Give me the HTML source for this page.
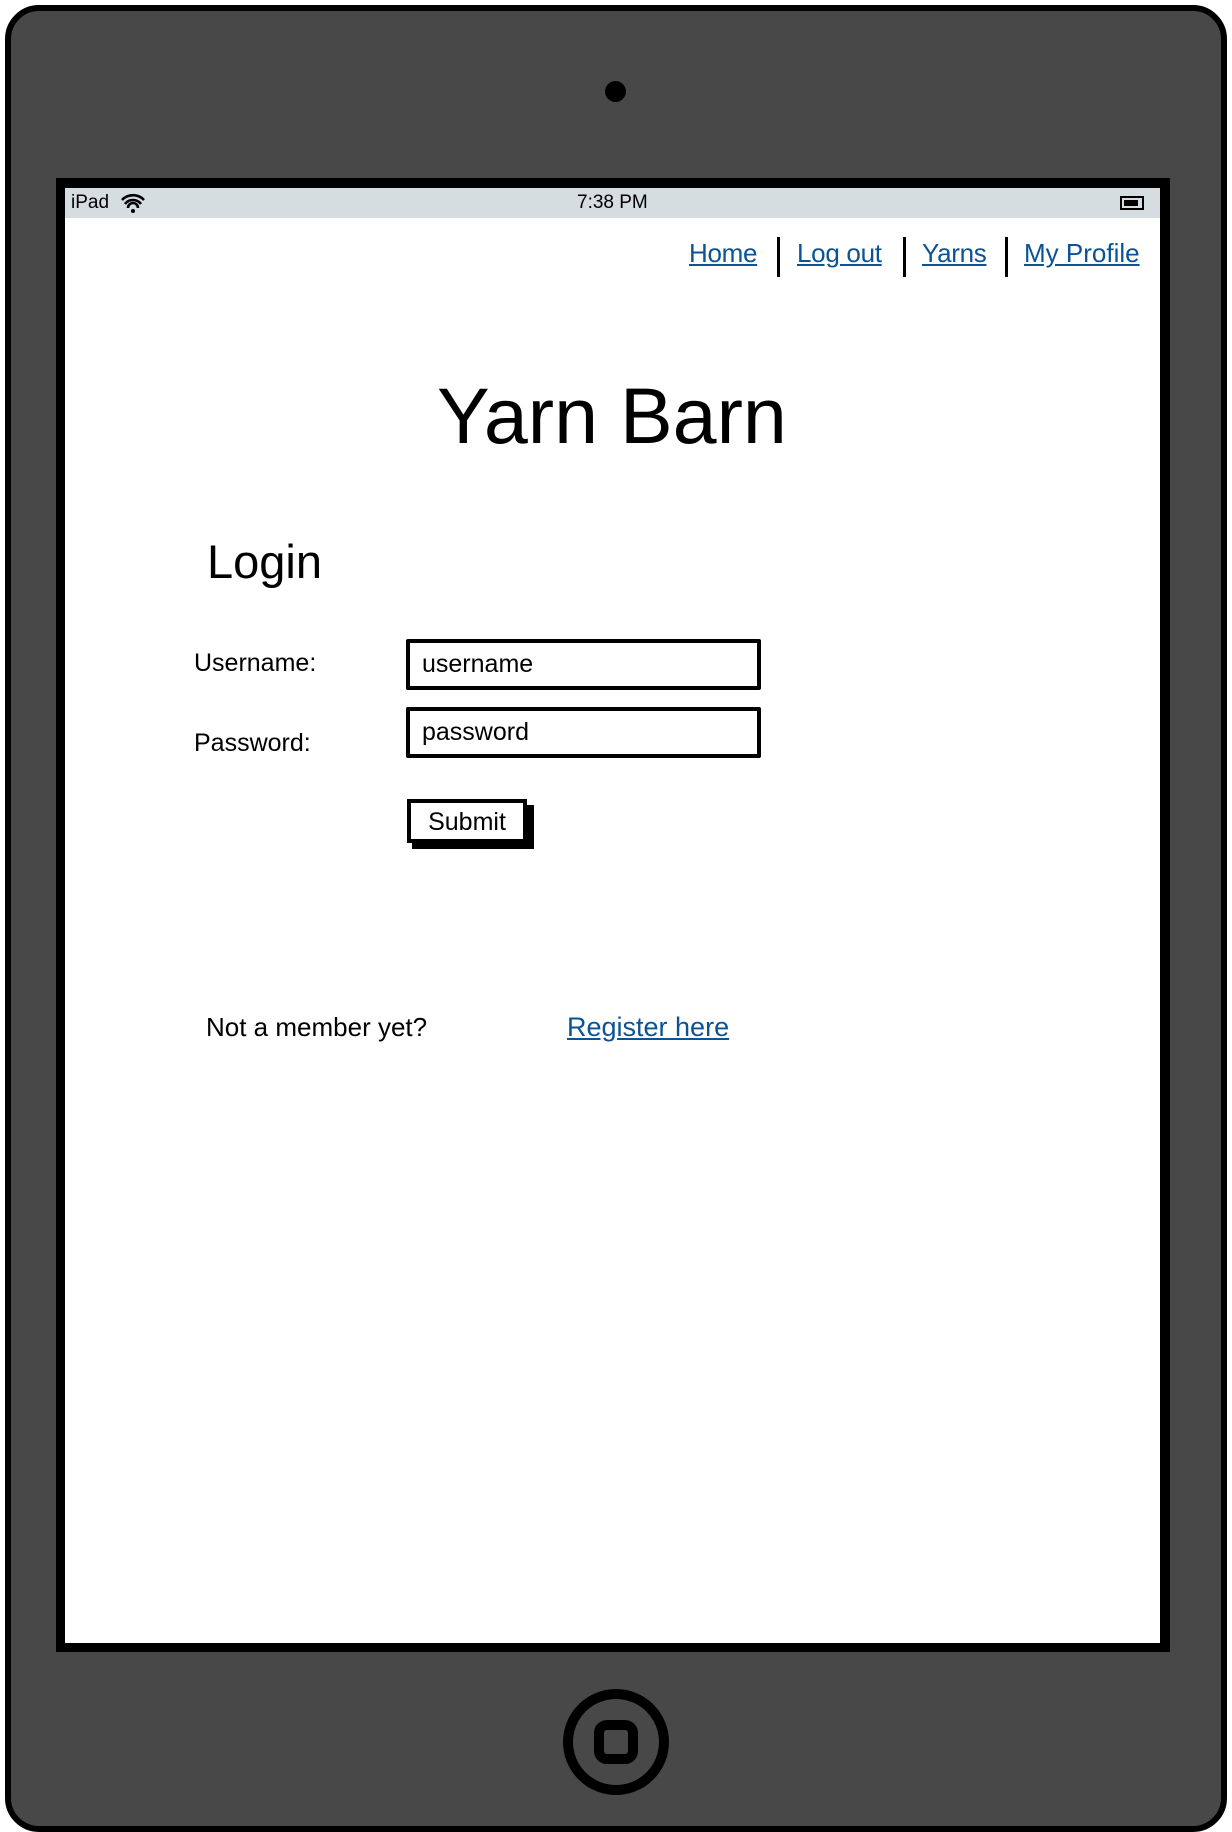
<!DOCTYPE html>
<html><head><meta charset="utf-8"><style>
body{margin:0;width:1232px;height:1832px;background:#fff;position:relative;overflow:hidden;font-family:"Liberation Sans",sans-serif}
.dev{position:absolute;left:5px;top:5px;width:1210px;height:1815px;background:#484848;border:6px solid #000;border-radius:34px}
.frame{position:absolute;left:56px;top:178px;width:1114px;height:1474px;background:#000}
.scr{position:absolute;left:65px;top:188px;width:1095px;height:1455px;background:#fff}
.sb{position:absolute;left:65px;top:188px;width:1095px;height:30px;background:#d6dde0;font-size:19px}
a{color:#0b5394;text-decoration:underline;position:absolute;font-size:26px;letter-spacing:-0.3px}
.t{position:absolute;color:#000}
.sep{position:absolute;width:3px;height:40px;background:#000;top:237px}
.inp{position:absolute;left:406px;width:347px;height:43px;border:4px solid #000;border-radius:2px}
.inp span{position:absolute;left:12px;top:7px;font-size:25px}
</style></head><body>
<div class="dev"></div>
<div style="position:absolute;left:605px;top:81px;width:21px;height:21px;border-radius:50%;background:#000"></div>
<div class="frame"></div><div class="scr"></div>
<div class="sb"><span style="position:absolute;left:6px;top:4px">iPad</span>
<svg style="position:absolute;left:55px;top:4px" width="26" height="22" viewBox="0 0 26 22"><path d="M2 8a15 15 0 0 1 22 0M5 12a10 10 0 0 1 16 0M8 16a5 5 0 0 1 10 0" stroke="#000" stroke-width="2.6" fill="none"/><circle cx="13" cy="19" r="2" fill="#000"/></svg>
<span style="position:absolute;left:512px;top:4px">7:38 PM</span>
<div style="position:absolute;left:1055px;top:8px;width:24px;height:14px;border:2px solid #000;box-sizing:border-box"><div style="margin:2px;width:14px;height:6px;background:#000"></div></div></div>
<a style="left:689px;top:238px">Home</a><div class="sep" style="left:777px"></div>
<a style="left:797px;top:238px">Log out</a><div class="sep" style="left:903px"></div>
<a style="left:922px;top:238px">Yarns</a><div class="sep" style="left:1005px"></div>
<a style="left:1024px;top:238px;letter-spacing:0">My Profile</a>
<div class="t" style="left:437px;top:370px;font-size:79px;letter-spacing:0">Yarn Barn</div>
<div class="t" style="left:207px;top:534px;font-size:47px">Login</div>
<div class="t" style="left:194px;top:649px;font-size:25px">Username:</div>
<div class="t" style="left:194px;top:729px;font-size:25px">Password:</div>
<div class="inp" style="top:639px"><span>username</span></div>
<div class="inp" style="top:707px"><span>password</span></div>
<div style="position:absolute;left:412px;top:805px;width:122px;height:44px;background:#000"></div>
<div style="position:absolute;left:407px;top:799px;width:112px;height:36px;border:4px solid #000;background:#fff;font-size:25px;text-align:center;line-height:38px">Submit</div>
<div class="t" style="left:206px;top:1012px;font-size:26px">Not a member yet?</div>
<a style="left:567px;top:1012px;font-size:27px;letter-spacing:0">Register here</a>
<svg style="position:absolute;left:560px;top:1686px" width="112" height="112"><circle cx="56" cy="56" r="48" stroke="#000" stroke-width="10" fill="none"/><rect x="39" y="39" width="34" height="34" rx="8" stroke="#000" stroke-width="10" fill="none"/></svg>
</body></html>
